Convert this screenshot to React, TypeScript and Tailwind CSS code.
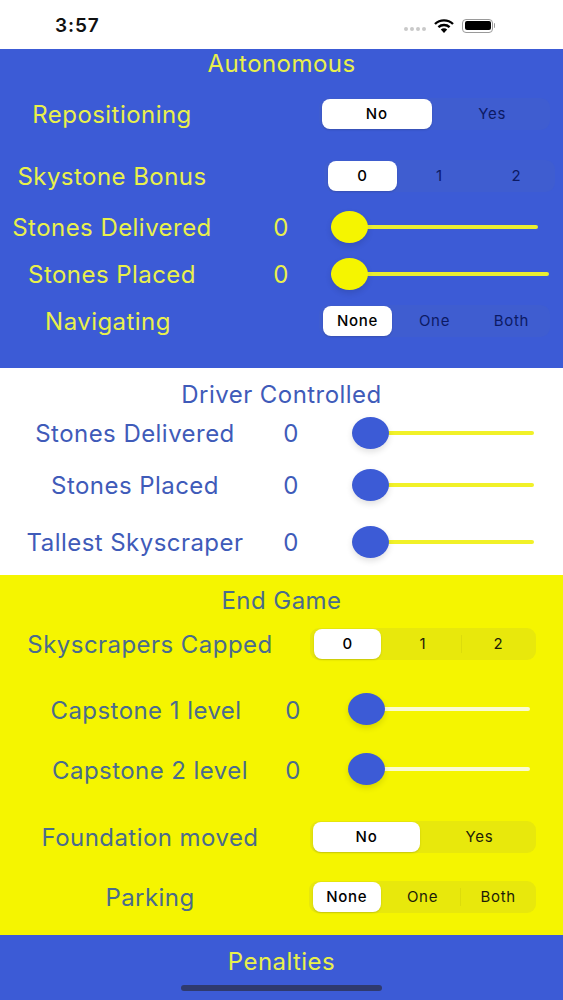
import React from "react";

const font = { fontFamily: "Inter, 'Liberation Sans', sans-serif" };

function Seg({ options, tone, outer }: { options: string[]; tone: "blue" | "yellow"; outer: string }) {
  const isTwo = options.length === 2;
  const track = tone === "blue" ? "bg-[#3f5dd0]" : "bg-[#e8e80c]";
  const text = tone === "blue" ? "text-[#0c1a64]" : "text-[#1c1c08]";
  return (
    <div className={`flex h-[32px] rounded-[9px] tracking-[0.7px] ${track} ${outer}`}>
      {options.map((o, i) => (
        <div key={o} className="flex-1 flex items-center justify-center relative">
          {i === 0 ? (
            <div
              className={`h-[30px] bg-white rounded-[8px] shadow-[0_1px_2px_rgba(0,0,0,0.15)] flex items-center justify-center text-black font-medium text-[15px] w-full ${isTwo ? "mx-[3px]" : "mx-[4px]"}`}
            >
              {o}
            </div>
          ) : (
            <span className={`text-[15px] font-normal ${text}`}>{o}</span>
          )}
          {tone === "yellow" && i === 2 ? (
            <div className="absolute left-0 top-[7px] h-[18px] w-px bg-[#dcdc0c]" />
          ) : null}
        </div>
      ))}
    </div>
  );
}

function Slider({ thumb, track, outer }: { thumb: string; track: string; outer: string }) {
  return (
    <div className={`relative flex items-center h-[32px] ${outer}`}>
      <div className={`h-[4px] w-full rounded-full ${track}`} />
      <div className={`absolute left-0 top-0 h-[32px] w-[37px] rounded-[50%] shadow-[0_3px_6px_rgba(0,0,0,0.12)] ${thumb}`} />
    </div>
  );
}

export default function App() {
  const y = "text-[#e9f04b] pt-[2px]";
  const b = "text-[#3f5bb9] pt-[2px]";
  const g = "text-[#4a6b8d] pt-[2px]";
  const title = "h-[28px] flex items-center justify-center";
  return (
    <div className="w-[563px] h-[1000px] overflow-hidden bg-white text-[24px] leading-[28px] tracking-[0.45px]" style={font}>
      {/* Status bar */}
      <div className="h-[49px] flex items-center bg-white relative">
        <span className="ml-[55px] mt-[2px] text-[19px] font-semibold text-[#111] tracking-[0.9px]">3:57</span>
        <div className="ml-auto mr-[68px] mt-[2px] flex items-center">
          <div className="flex gap-[2px] mr-[8px] mt-[6px]">
            <div className="w-[4px] h-[4px] rounded-full bg-[#c9c9c9]" />
            <div className="w-[4px] h-[4px] rounded-full bg-[#c9c9c9]" />
            <div className="w-[4px] h-[4px] rounded-full bg-[#c9c9c9]" />
            <div className="w-[4px] h-[4px] rounded-full bg-[#c9c9c9]" />
          </div>
          <svg width="20" height="14" viewBox="0 0 20 14" className="mr-[8px]">
            <path d="M1 5 A13 13 0 0 1 19 5" fill="none" stroke="#000" strokeWidth="2.4" />
            <path d="M4.4 8.2 A8.4 8.4 0 0 1 15.6 8.2" fill="none" stroke="#000" strokeWidth="2.4" />
            <path d="M10 14 L6.8 10.6 A4.6 4.6 0 0 1 13.2 10.6 Z" fill="#000" />
          </svg>
          <div className="relative w-[31px] h-[14px] mr-[2px] rounded-[4px] border border-[#9a9a9a] p-[1.5px]">
            <div className="w-full h-full rounded-[2px] bg-black" />
            <div className="absolute -right-[3px] top-[3.5px] w-[1.5px] h-[5px] rounded-r bg-[#9a9a9a]" />
          </div>
        </div>
      </div>

      {/* Autonomous */}
      <section className="h-[319px] bg-[#3c5bd6]">
        <div className={title}><span className={y}>Autonomous</span></div>
        <div className="flex items-center h-[74px]">
          <div className={`w-[224px] text-center ${y}`}>Repositioning</div>
          <Seg options={["No", "Yes"]} tone="blue" outer="ml-[95px] w-[231px]" />
        </div>
        <div className="flex items-center h-[50px]">
          <div className={`w-[224px] text-center ${y}`}>Skystone Bonus</div>
          <Seg options={["0", "1", "2"]} tone="blue" outer="ml-[100px] w-[231px]" />
        </div>
        <div className="flex items-center h-[52px]">
          <div className={`w-[224px] text-center ${y}`}>Stones Delivered</div>
          <div className={`ml-[32px] w-[50px] text-center ${y}`}>0</div>
          <Slider thumb="bg-[#f5f500]" track="bg-[#e9ee30]" outer="ml-[25px] w-[207px]" />
        </div>
        <div className="flex items-center h-[42px]">
          <div className={`w-[224px] text-center ${y}`}>Stones Placed</div>
          <div className={`ml-[32px] w-[50px] text-center ${y}`}>0</div>
          <Slider thumb="bg-[#f5f500]" track="bg-[#e9ee30]" outer="ml-[25px] w-[218px]" />
        </div>
        <div className="flex items-center h-[52px]">
          <div className={`w-[216px] text-center ${y}`}>Navigating</div>
          <Seg options={["None", "One", "Both"]} tone="blue" outer="ml-[103px] w-[231px]" />
        </div>
      </section>

      {/* Driver Controlled */}
      <section className="h-[207px] bg-white pt-[12px]">
        <div className={title}><span className={b}>Driver Controlled</span></div>
        <div className="flex items-center h-[50px]">
          <div className={`w-[270px] text-center ${b}`}>Stones Delivered</div>
          <div className={`w-[42px] text-center ${b}`}>0</div>
          <Slider thumb="bg-[#3c5bd6]" track="bg-[#f1f128]" outer="ml-[40px] w-[182px]" />
        </div>
        <div className="flex items-center h-[54px]">
          <div className={`w-[270px] text-center ${b}`}>Stones Placed</div>
          <div className={`w-[42px] text-center ${b}`}>0</div>
          <Slider thumb="bg-[#3c5bd6]" track="bg-[#f1f128]" outer="ml-[40px] w-[182px]" />
        </div>
        <div className="flex items-center h-[60px]">
          <div className={`w-[270px] text-center ${b}`}>Tallest Skyscraper</div>
          <div className={`w-[42px] text-center ${b}`}>0</div>
          <Slider thumb="bg-[#3c5bd6]" track="bg-[#f1f128]" outer="ml-[40px] w-[182px]" />
        </div>
      </section>

      {/* End Game */}
      <section className="h-[360px] bg-[#f5f500] pt-[11px]">
        <div className={title}><span className={g}>End Game</span></div>
        <div className="flex items-center h-[60px]">
          <div className={`w-[300px] text-center ${g}`}>Skyscrapers Capped</div>
          <Seg options={["0", "1", "2"]} tone="yellow" outer="ml-[10px] w-[226px]" />
        </div>
        <div className="flex items-center h-[72px]">
          <div className={`ml-[10px] w-[272px] text-center ${g}`}>Capstone 1 level</div>
          <div className={`w-[22px] text-center ${g}`}>0</div>
          <Slider thumb="bg-[#3c5bd6]" track="bg-[#fbfbd0]" outer="ml-[44px] w-[182px] -mt-[2px]" />
        </div>
        <div className="flex items-center h-[48px]">
          <div className={`ml-[18px] w-[264px] text-center ${g}`}>Capstone 2 level</div>
          <div className={`w-[22px] text-center ${g}`}>0</div>
          <Slider thumb="bg-[#3c5bd6]" track="bg-[#fbfbd0]" outer="ml-[44px] w-[182px] -mt-[2px]" />
        </div>
        <div className="flex items-center h-[86px]">
          <div className={`w-[300px] text-center ${g}`}>Foundation moved</div>
          <Seg options={["No", "Yes"]} tone="yellow" outer="ml-[10px] w-[226px]" />
        </div>
        <div className="flex items-center h-[34px]">
          <div className={`w-[300px] text-center ${g}`}>Parking</div>
          <Seg options={["None", "One", "Both"]} tone="yellow" outer="ml-[9px] w-[227px]" />
        </div>
      </section>

      {/* Penalties */}
      <section className="h-[65px] bg-[#3c5bd6] relative pt-[12px]">
        <div className={title}><span className={y}>Penalties</span></div>
        <div className="absolute left-[181px] top-[50px] w-[201px] h-[6px] rounded-full bg-[#2f3a6e]" />
      </section>
    </div>
  );
}
